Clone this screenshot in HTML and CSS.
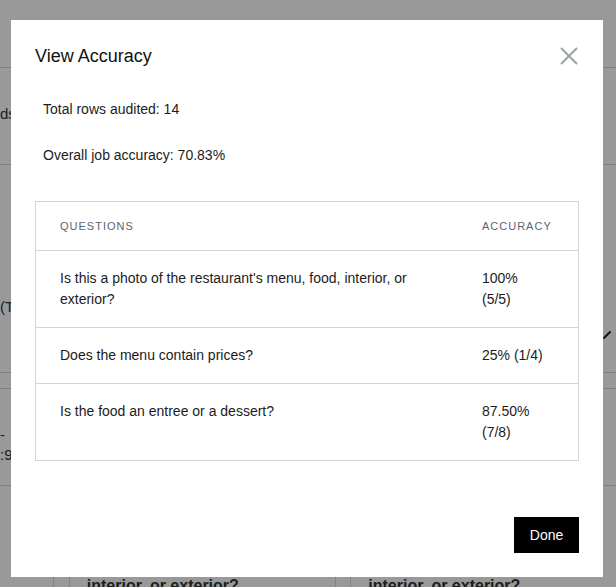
FILE: index.html
```html
<!DOCTYPE html>
<html lang="en">
<head>
  <meta charset="UTF-8">
  <meta name="viewport" content="width=device-width, initial-scale=1.0">
  <title>View Accuracy</title>
  <link rel="stylesheet" href="styles.css">
</head>
<body>
  <div class="page">
    <div class="page-row row-a"><span class="bg-text">ds:</span></div>
    <div class="page-row row-b"><span class="bg-text">(Text)</span><span class="pencil"></span></div>
    <div class="page-row row-c"></div>
    <div class="page-row row-d"><span class="bg-text">-<br>:9</span></div>
    <div class="page-grid">
      <div class="cell narrow"></div>
      <div class="cell wide">interior, or exterior?</div>
      <div class="cell narrow"></div>
      <div class="cell wide">interior, or exterior?</div>
    </div>
  </div>

  <div class="overlay">
    <div class="modal">
      <div class="modal-header">
        <h2>View Accuracy</h2>
        <button class="close" aria-label="Close">
          <svg width="18" height="18" viewBox="0 0 18 18">
            <path d="M1 1L17 17M17 1L1 17" stroke="#9aa3a6" stroke-width="2" fill="none"/>
          </svg>
        </button>
      </div>

      <p class="stat">Total rows audited: 14</p>
      <p class="stat">Overall job accuracy: 70.83%</p>

      <table class="accuracy">
        <thead>
          <tr>
            <th>Questions</th>
            <th class="col-acc">Accuracy</th>
          </tr>
        </thead>
        <tbody>
          <tr>
            <td>Is this a photo of the restaurant's menu, food, interior, or exterior?</td>
            <td class="col-acc">100% (5/5)</td>
          </tr>
          <tr>
            <td>Does the menu contain prices?</td>
            <td class="col-acc">25% (1/4)</td>
          </tr>
          <tr>
            <td>Is the food an entree or a dessert?</td>
            <td class="col-acc">87.50% (7/8)</td>
          </tr>
        </tbody>
      </table>

      <div class="modal-footer">
        <button class="done">Done</button>
      </div>
    </div>
  </div>
</body>
</html>
```

FILE: styles.css
```css
html, body {
  margin: 0;
  height: 100%;
  overflow: hidden;
}
body {
  font-family: "Liberation Sans", Arial, sans-serif;
  color: #1c1c1c;
  background: #fff;
}

/* page behind the modal */
.page {
  padding-top: 67px;
}
.page-row {
  border-top: 1px solid #d8d8d8;
  position: relative;
}
.row-a { height: 96px; }
.row-b { height: 207px; }
.row-c { height: 15px; }
.row-d { height: 96px; }
.bg-text {
  display: block;
  font-size: 15px;
  color: #333;
}
.row-a .bg-text { padding-top: 37px; }
.row-b .bg-text { padding-top: 133px; }
.row-d .bg-text { padding-top: 36px; line-height: 20px; }
.pencil {
  position: absolute;
  right: 8px;
  top: 165px;
  width: 2px;
  height: 10px;
  background: #222;
  transform: rotate(45deg);
}
.page-grid {
  display: flex;
  border-top: 1px solid #d8d8d8;
  height: 120px;
}
.cell {
  box-sizing: border-box;
  border-left: 1px solid #d8d8d8;
  font-size: 16px;
  font-weight: bold;
  padding: 91px 0 0 17px;
  color: #333;
}
.cell.narrow { width: 16px; padding: 0; }
.cell.wide { width: 269px; }
.page-grid .cell:first-child { margin-left: 53px; }

/* modal */
.overlay {
  position: fixed;
  inset: 0;
  background: rgba(0, 0, 0, 0.4);
}
.modal {
  box-sizing: border-box;
  width: 592px;
  height: 557px;
  margin: 20px 0 0 11px;
  background: #fff;
  padding: 24px 24px 0 24px;
  display: flex;
  flex-direction: column;
}
.modal-header {
  display: flex;
  justify-content: space-between;
  align-items: center;
  height: 24px;
}
.modal-header h2 {
  margin: 0;
  font-size: 18px;
  font-weight: normal;
  color: #111;
}
.close {
  background: none;
  border: none;
  padding: 0;
  width: 18px;
  height: 18px;
  margin-right: 1px;
  cursor: pointer;
}
.close svg { display: block; }

.stat {
  margin: 0;
  padding-left: 8px;
  font-size: 14px;
  line-height: 20px;
}
.modal-header + .stat { margin-top: 31px; }
.stat + .stat { margin-top: 26px; }

.accuracy {
  margin-top: 36px;
  border-collapse: collapse;
  table-layout: fixed;
  width: 544px;
  border: 1px solid #d4d4d4;
  font-size: 14px;
}
.accuracy th {
  text-align: left;
  font-weight: normal;
  font-size: 11px;
  letter-spacing: 1px;
  text-transform: uppercase;
  color: #5b6570;
  padding: 17px 24px;
  line-height: 14px;
}
.accuracy td {
  padding: 17px 24px;
  line-height: 21px;
  vertical-align: top;
  border-top: 1px solid #d4d4d4;
}
.accuracy .col-acc {
  width: 64px;
  padding-right: 32px;
}

.modal-footer {
  margin-top: auto;
  display: flex;
  justify-content: flex-end;
  padding-bottom: 24px;
}
.done {
  background: #000;
  color: #fff;
  border: none;
  font-family: inherit;
  font-size: 14px;
  width: 65px;
  height: 36px;
  cursor: pointer;
}
```
